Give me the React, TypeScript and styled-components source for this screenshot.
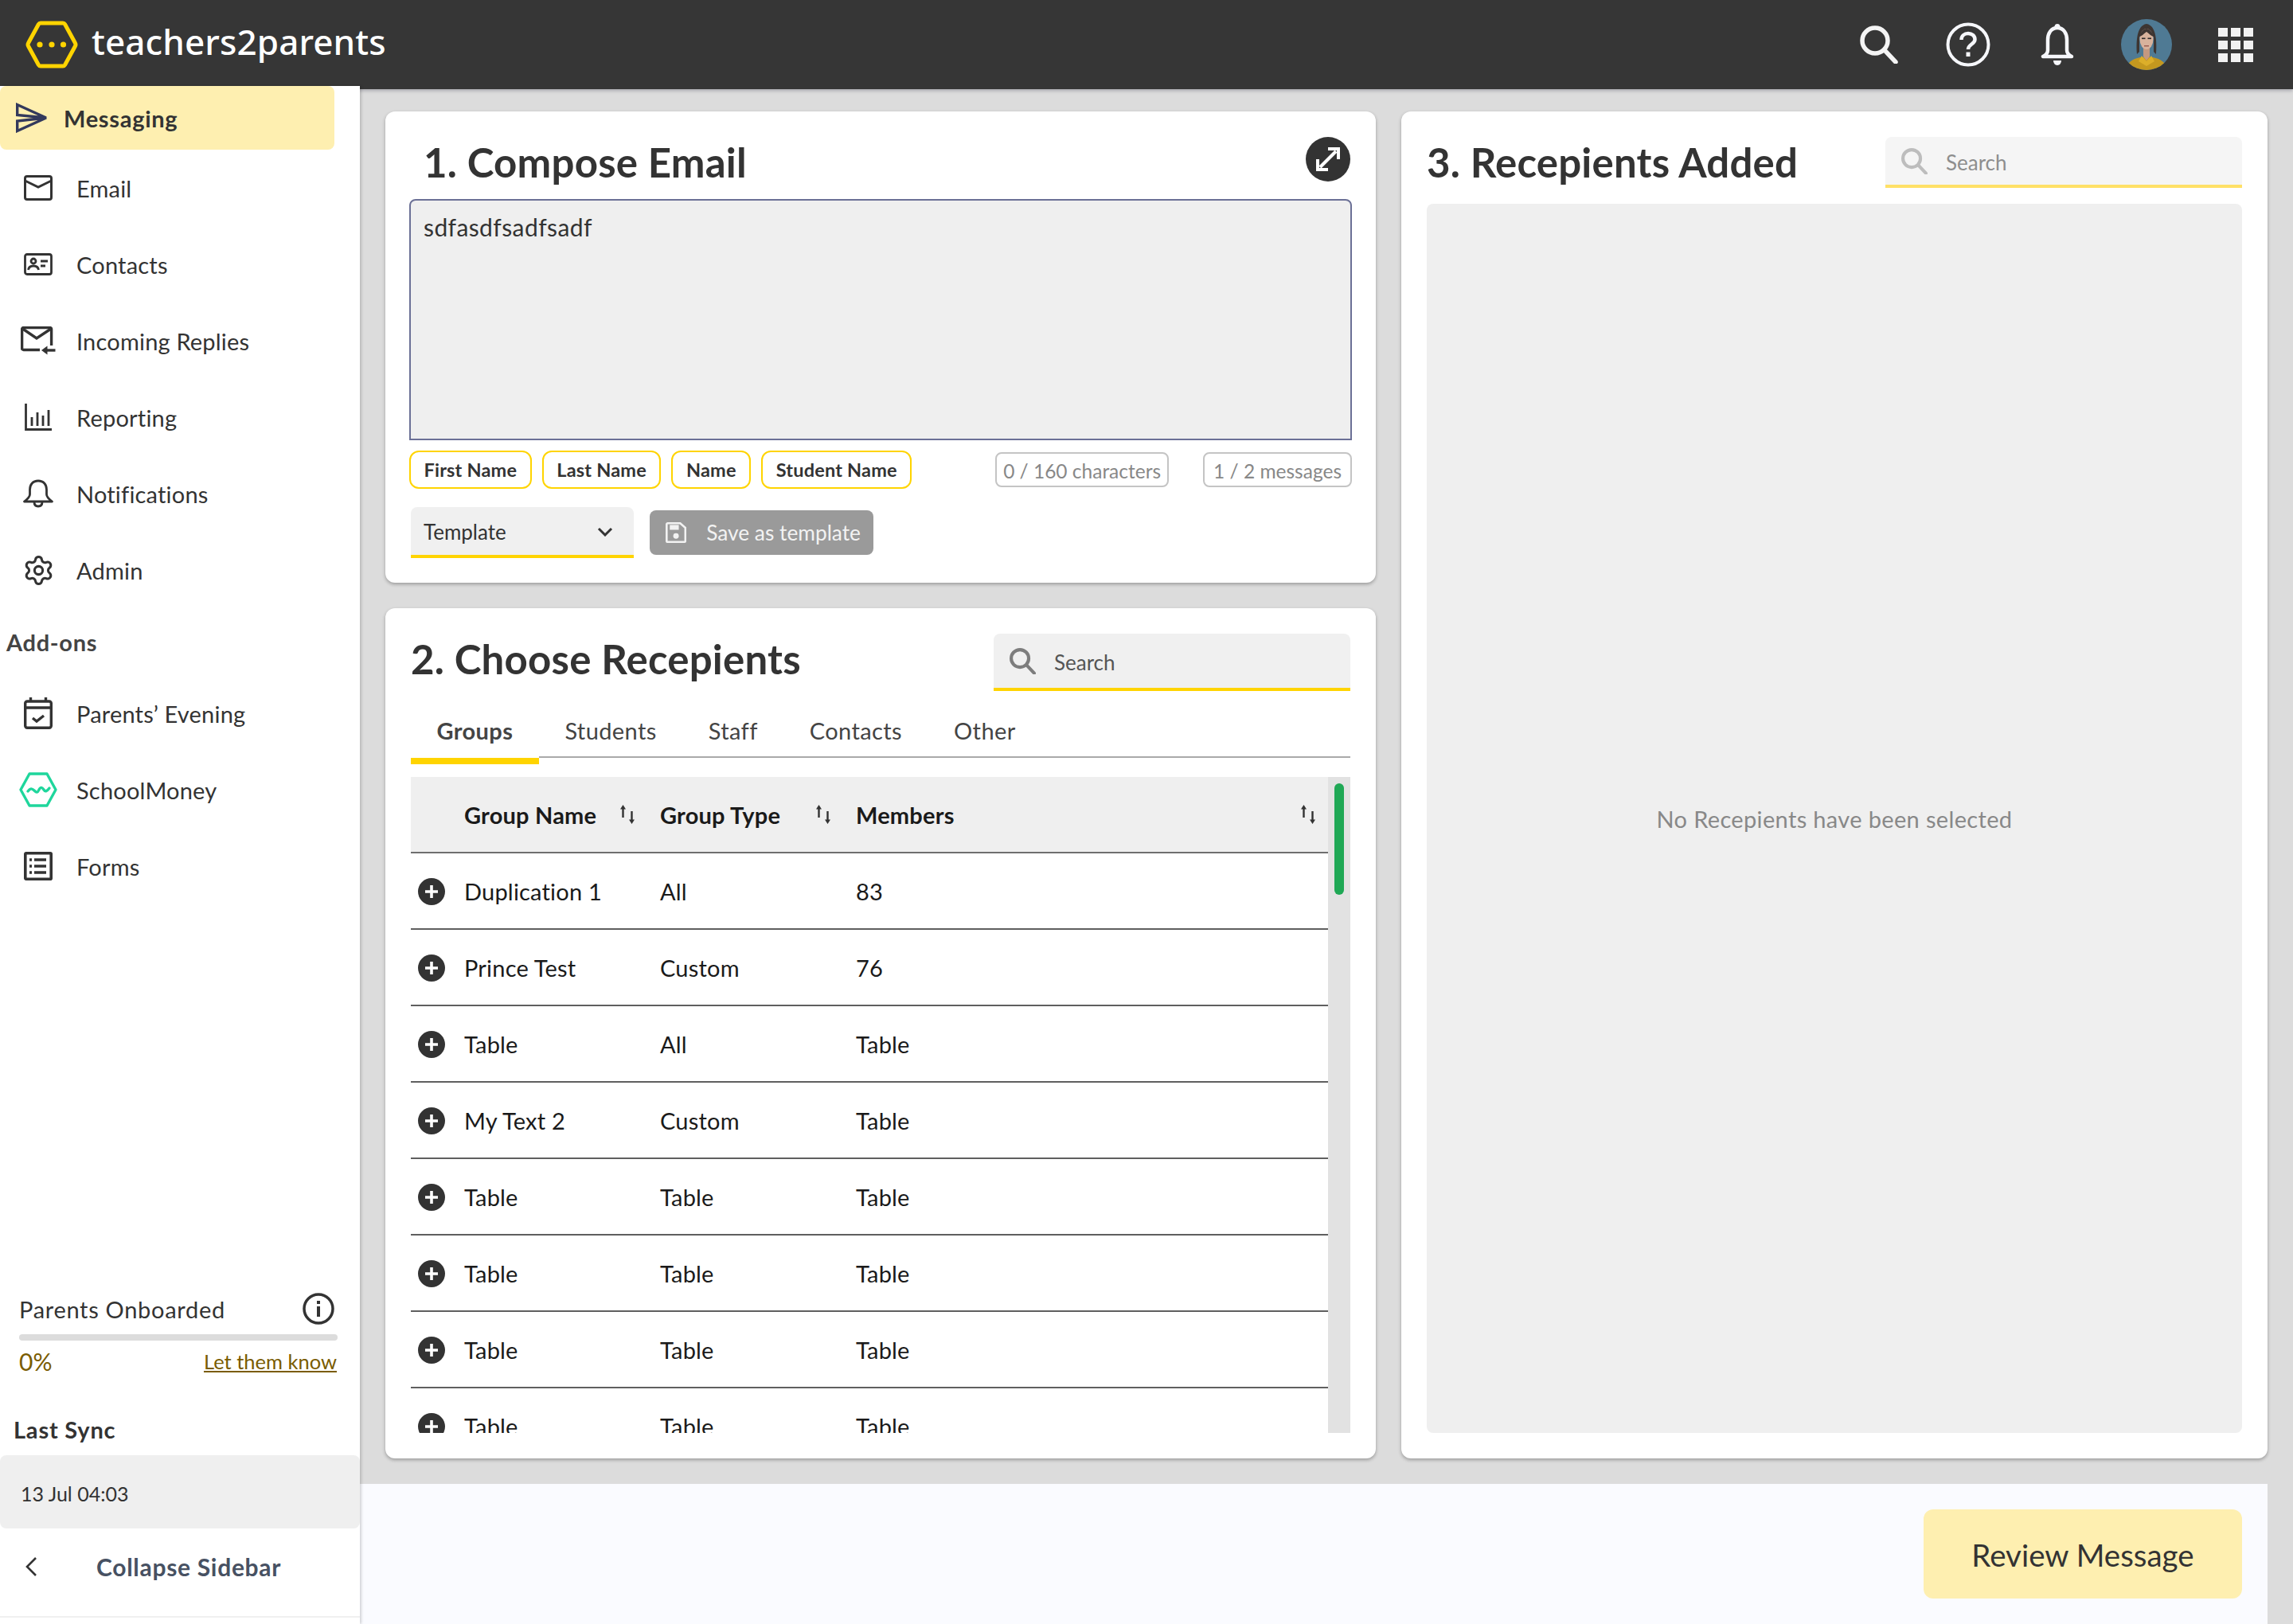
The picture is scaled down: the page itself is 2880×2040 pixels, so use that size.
import { Settings } from "lucide-react";
import styled, { createGlobalStyle } from "styled-components";

const GlobalStyle = createGlobalStyle`
  html, body {
    margin: 0;
    padding: 0;
    background: #dcdcdc;
  }
  * {
    box-sizing: border-box;
  }
`;

const navTop = [
  { label: "Email", icon: <EmailIcon /> },
  { label: "Contacts", icon: <ContactsIcon /> },
  { label: "Incoming Replies", icon: <RepliesIcon /> },
  { label: "Reporting", icon: <ReportingIcon /> },
  { label: "Notifications", icon: <NavBellIcon /> },
  { label: "Admin", icon: <Settings size={41} strokeWidth={1.8} color="#333" /> },
];

const navAddons = [
  { label: "Parents’ Evening", icon: <CalendarIcon /> },
  { label: "SchoolMoney", icon: <MoneyIcon /> },
  { label: "Forms", icon: <FormsIcon /> },
];

const chips = ["First Name", "Last Name", "Name", "Student Name"];
const tabs = ["Groups", "Students", "Staff", "Contacts", "Other"];

const rows = [
  ["Duplication 1", "All", "83"],
  ["Prince Test", "Custom", "76"],
  ["Table", "All", "Table"],
  ["My Text 2", "Custom", "Table"],
  ["Table", "Table", "Table"],
  ["Table", "Table", "Table"],
  ["Table", "Table", "Table"],
  ["Table", "Table", "Table"],
];

export default function App() {
  return (
    <Page>
      <GlobalStyle />
      <Header>
        <Logo>
          <LogoMark />
          <LogoText>teachers2parents</LogoText>
        </Logo>
        <HeaderIcons>
          <HeaderSlot>
            <SearchIcon size={48} color="#f4f4f4" stroke={5.5} />
          </HeaderSlot>
          <HeaderSlot>
            <HelpIcon />
          </HeaderSlot>
          <HeaderSlot>
            <BellSolidIcon />
          </HeaderSlot>
          <HeaderSlot>
            <Avatar />
          </HeaderSlot>
          <HeaderSlot>
            <AppsGrid>
              {Array.from({ length: 9 }).map((_, i) => (
                <AppsDot key={i} />
              ))}
            </AppsGrid>
          </HeaderSlot>
        </HeaderIcons>
      </Header>

      <Body>
        <Sidebar>
          <ActiveItem>
            <PlaneIcon />
            Messaging
          </ActiveItem>
          {navTop.map((n) => (
            <NavItem key={n.label}>
              <NavIcon>{n.icon}</NavIcon>
              {n.label}
            </NavItem>
          ))}
          <AddonsTitle>Add-ons</AddonsTitle>
          {navAddons.map((n) => (
            <NavItem key={n.label}>
              <NavIcon>{n.icon}</NavIcon>
              {n.label}
            </NavItem>
          ))}

          <Onboarding>
            <OnboardRow>
              <OnboardLabel>Parents Onboarded</OnboardLabel>
              <InfoIcon />
            </OnboardRow>
            <Progress />
            <OnboardRow>
              <Percent>0%</Percent>
              <LetKnow>Let them know</LetKnow>
            </OnboardRow>
          </Onboarding>
          <SyncTitle>Last Sync</SyncTitle>
          <SyncBox>13 Jul 04:03</SyncBox>
          <Collapse>
            <CollapseChevron />
            Collapse Sidebar
          </Collapse>
        </Sidebar>

        <Main>
          <Cards>
            <LeftColumn>
              <ComposeCard>
                <ComposeHead>
                  <Title>1. Compose Email</Title>
                  <ExpandButton>
                    <ExpandIcon />
                  </ExpandButton>
                </ComposeHead>
                <MessageBox>sdfasdfsadfsadf</MessageBox>
                <ChipRow>
                  {chips.map((c) => (
                    <Chip key={c}>{c}</Chip>
                  ))}
                  <Counter $first>0 / 160 characters</Counter>
                  <Counter>1 / 2 messages</Counter>
                </ChipRow>
                <ActionRow>
                  <TemplateSelect>
                    Template
                    <ChevronIcon />
                  </TemplateSelect>
                  <SaveButton>
                    <SaveIcon />
                    Save as template
                  </SaveButton>
                </ActionRow>
              </ComposeCard>

              <RecipientsCard>
                <CardHead>
                  <Title>2. Choose Recepients</Title>
                  <SearchField $width={448} $height={72}>
                    <SearchIcon size={33} color="#7d7d7d" stroke={6} />
                    Search
                  </SearchField>
                </CardHead>
                <Tabs>
                  {tabs.map((t, i) => (
                    <Tab key={t} $active={i === 0}>
                      {t}
                    </Tab>
                  ))}
                  <TabFiller />
                </Tabs>
                <TableWrap>
                  <TableBody>
                    <HeadRow>
                      <HeadCell>
                        Group Name
                        <SortIcon />
                      </HeadCell>
                      <HeadCell>
                        Group Type
                        <SortIcon />
                      </HeadCell>
                      <HeadCell>
                        Members
                        <SortIcon />
                      </HeadCell>
                    </HeadRow>
                    {rows.map((r, i) => (
                      <Row key={i}>
                        <AddSlot>
                          <PlusIcon />
                        </AddSlot>
                        <Cell>{r[0]}</Cell>
                        <Cell>{r[1]}</Cell>
                        <Cell>{r[2]}</Cell>
                      </Row>
                    ))}
                  </TableBody>
                  <ScrollTrack>
                    <ScrollThumb />
                  </ScrollTrack>
                </TableWrap>
              </RecipientsCard>
            </LeftColumn>

            <AddedCard>
              <AddedHead>
                <Title>3. Recepients Added</Title>
                <SearchField $width={448} $height={64} $faded>
                  <SearchIcon size={33} color="#bdbdbd" stroke={6} />
                  Search
                </SearchField>
              </AddedHead>
              <EmptyList>No Recepients have been selected</EmptyList>
            </AddedCard>
          </Cards>

          <Footer>
            <ReviewButton>Review Message</ReviewButton>
          </Footer>
        </Main>
      </Body>
    </Page>
  );
}

function LogoMark() {
  return (
    <svg width="66" height="60" viewBox="0 0 66 60" fill="none">
      <path
        d="M19 3h28a3 3 0 0 1 2.6 1.5l12.8 23.5a4 4 0 0 1 0 4L49.6 55.500a3 3 0 0 1-2.600 1.500H19a3 3 0 0 1-2.600-1.500L3.600 32a4 4 0 0 1 0-4L16.400 4.500A3 3 0 0 1 19 3z"
        stroke="#ffd400"
        strokeWidth="5"
      />
      <circle cx="18" cy="30" r="3.600" fill="#ffd400" />
      <circle cx="33" cy="30" r="3.600" fill="#ffd400" />
      <circle cx="47.500" cy="30" r="3.600" fill="#ffd400" />
    </svg>
  );
}

function SearchIcon({ size, color, stroke }: { size: number; color: string; stroke: number }) {
  return (
    <svg width={size} height={size} viewBox="0 0 48 48" fill="none" stroke={color} strokeLinecap="round">
      <circle cx="19" cy="19" r="16" strokeWidth={stroke} />
      <path d="M31 31l14 15" strokeWidth={stroke} />
    </svg>
  );
}

function HelpIcon() {
  return (
    <svg width="56" height="56" viewBox="0 0 56 56" fill="none" stroke="#f6f7fb">
      <circle cx="28" cy="28" r="25.500" strokeWidth="4" />
      <path d="M19.500 22c0-5 3.800-8 8.500-8s8.500 3 8.500 7.500c0 6-8.500 6-8.500 12.500" strokeWidth="4.500" />
      <path d="M28 37.500v5.500" strokeWidth="5" />
    </svg>
  );
}

function BellSolidIcon() {
  return (
    <svg width="42" height="54" viewBox="0 0 42 54" fill="none" stroke="#f6f7fb">
      <path
        d="M21 6c-8 0-12 7-12 15v13c0 3-2 6-6 8h36c-4-2-6-5-6-8V21c0-8-4-15-12-15z"
        strokeWidth="4.500"
        strokeLinejoin="round"
      />
      <circle cx="21" cy="4.500" r="3.500" fill="#f6f7fb" stroke="none" />
      <path d="M16 47h10c0 3-2 6-5 6s-5-3-5-6z" fill="#f6f7fb" stroke="none" />
    </svg>
  );
}

function Avatar() {
  return (
    <svg width="64" height="64" viewBox="0 0 64 64">
      <defs>
        <clipPath id="avatar-clip">
          <circle cx="32" cy="32" r="32" />
        </clipPath>
      </defs>
      <g clipPath="url(#avatar-clip)">
        <rect width="64" height="64" fill="#4f7a94" />
        <path d="M6 64c1-9 8-14 18-16h16c10 2 17 7 18 16z" fill="#c4981f" />
        <path d="M26 46l6 7 6-7 4 7-10 6-10-6z" fill="#dcae2a" />
        <path d="M20 44c-1-14-1-36 12-38 13 2 13 24 12 38l-3-3V22H23v19z" fill="#3d3532" />
        <path d="M28 36h8v11l-4 5-4-5z" fill="#c49880" />
        <ellipse cx="32" cy="25" rx="8.500" ry="13" fill="#d8b29c" />
        <path d="M23 22c2-7 6-10 9-10s7 3 9 10c-4-1-7-5-9-6-2 1-5 5-9 6z" fill="#3d3532" />
        <rect x="26" y="23.500" width="4.500" height="1.600" fill="#2e2b2a" />
        <rect x="33.500" y="23.500" width="4.500" height="1.600" fill="#2e2b2a" />
        <rect x="29" y="33" width="6" height="1.400" fill="#98584f" />
      </g>
    </svg>
  );
}

function PlaneIcon() {
  return (
    <svg width="42" height="38" viewBox="0 0 42 38" fill="none" stroke="#33395c" strokeWidth="3.400">
      <path d="M1.700 2.500L38 19 1.700 15.500z" />
      <path d="M1.700 35.500L38 19 1.700 23z" />
    </svg>
  );
}

function EmailIcon() {
  return (
    <svg width="36" height="32" viewBox="0 0 36 32" fill="none" stroke="#333" strokeWidth="3">
      <rect x="1.500" y="1.500" width="33" height="29" rx="2.500" />
      <path d="M1.500 7l16.500 8 16.500-8" />
    </svg>
  );
}

function ContactsIcon() {
  return (
    <svg width="36" height="28" viewBox="0 0 36 28" fill="none" stroke="#333" strokeWidth="2.800">
      <rect x="1.500" y="1.500" width="33" height="25" rx="2.500" />
      <circle cx="12" cy="10" r="3" />
      <path d="M5.500 21c.5-3.500 3-5 6.500-5s6 1.500 6.500 5" />
      <path d="M21 10h9M21 16h6" />
    </svg>
  );
}

function RepliesIcon() {
  return (
    <svg width="44" height="36" viewBox="0 0 44 36" fill="none" stroke="#333" strokeWidth="3.400">
      <path d="M24 29.500H3.600a2 2 0 0 1-2-2V3.600a2 2 0 0 1 2-2h33a2 2 0 0 1 2 2V24" />
      <path d="M2.500 3L20 15 38 3" />
      <path d="M43.500 30H31" />
      <path d="M33.500 24.500L26 30l7.500 5.500z" fill="#333" stroke="none" />
    </svg>
  );
}

function ReportingIcon() {
  return (
    <svg width="34" height="34" viewBox="0 0 34 34" fill="none" stroke="#333" strokeWidth="2.800">
      <path d="M1.500 0v32.500H34" />
      <path d="M9 17v11M16 11v17M23 15v13M30 8v20" />
    </svg>
  );
}

function NavBellIcon() {
  return (
    <svg width="38" height="36" viewBox="0 0 38 36" fill="none" stroke="#333" strokeWidth="2.800">
      <path d="M19 2c-7 0-10.500 5-10.500 11v6c0 3-3 6-7 9h35c-4-3-7-6-7-9v-6C29.500 7 26 2 19 2z" strokeLinejoin="round" />
      <path d="M14 28.500c0 3.500 2 5.500 5 5.500s5-2 5-5.500" />
    </svg>
  );
}

function CalendarIcon() {
  return (
    <svg width="36" height="40" viewBox="0 0 36 40" fill="none" stroke="#333" strokeWidth="3.400">
      <rect x="1.700" y="5" width="32.600" height="33.300" rx="2.500" />
      <path d="M1.500 13h33" />
      <path d="M8.500 0v6M27.500 0v6" />
      <path d="M11 26l5 4 9-7" />
    </svg>
  );
}

function MoneyIcon() {
  return (
    <svg width="48" height="44" viewBox="0 0 48 44" fill="none" stroke="#1fd69c" strokeWidth="3.400" strokeLinejoin="round">
      <path d="M13 2h22l11 20-11 20H13L2 22z" />
      <path d="M11 24c3-4 5-4 8-1s4 3 6-1 4-3 6 0 4 2 7-2" strokeLinecap="round" />
    </svg>
  );
}

function FormsIcon() {
  return (
    <svg width="36" height="36" viewBox="0 0 36 36" fill="none" stroke="#333" strokeWidth="3.600">
      <rect x="1.800" y="1.800" width="32.400" height="32.400" rx="1" />
      <path d="M13 10h15M13 18h15M13 26h15" />
      <path d="M7 10h3M7 18h3M7 26h3" />
    </svg>
  );
}

function InfoIcon() {
  return (
    <svg width="40" height="40" viewBox="0 0 40 40" fill="none" stroke="#333">
      <circle cx="20" cy="20" r="18" strokeWidth="3.500" />
      <path d="M20 17v13" strokeWidth="4" />
      <path d="M20 10v4" strokeWidth="4" />
    </svg>
  );
}

function CollapseChevron() {
  return (
    <svg width="16" height="26" viewBox="0 0 16 26" fill="none" stroke="#333" strokeWidth="2.600">
      <path d="M14 2L3 13l11 11" />
    </svg>
  );
}

function ExpandIcon() {
  return (
    <svg width="36" height="36" viewBox="0 0 36 36" fill="none" stroke="#fff" strokeWidth="4">
      <path d="M8 28L28 8" />
      <path d="M18 5h13v13" />
      <path d="M5 18v13h13" />
    </svg>
  );
}

function ChevronIcon() {
  return (
    <svg width="20" height="12" viewBox="0 0 20 12" fill="none" stroke="#333" strokeWidth="3">
      <path d="M2 2l8 8 8-8" />
    </svg>
  );
}

function SaveIcon() {
  return (
    <svg width="30" height="30" viewBox="0 0 30 30" fill="none" stroke="#f2f2f2" strokeWidth="3">
      <path d="M3 1.500h18l7.500 6.500v19a1.500 1.500 0 0 1-1.500 1.500H3A1.500 1.500 0 0 1 1.500 27V3A1.500 1.500 0 0 1 3 1.500z" />
      <rect x="6" y="4" width="13" height="7" fill="#f2f2f2" stroke="none" />
      <circle cx="15" cy="20" r="4" fill="#f2f2f2" stroke="none" />
    </svg>
  );
}

function SortIcon() {
  return (
    <svg width="18" height="24" viewBox="0 0 18 24" fill="#333">
      <path d="M3.500 0L7 5.500H4.700V16H2.300V5.500H0z" />
      <path d="M14.500 24L11 18.500h2.300V8h2.400v10.500H18z" />
    </svg>
  );
}

function PlusIcon() {
  return (
    <svg width="34" height="34" viewBox="0 0 34 34">
      <circle cx="17" cy="17" r="17" fill="#333" />
      <path d="M17 9v16M9 17h16" stroke="#fff" strokeWidth="3.600" />
    </svg>
  );
}

const Page = styled.div`
  width: 2880px;
  height: 2040px;
  display: flex;
  flex-direction: column;
  overflow: hidden;
  background: #dcdcdc;
  font-family: "Lato", "Noto Sans", sans-serif;
  font-size: 29px;
  color: #333;
`;

const Header = styled.header`
  height: 112px;
  flex-shrink: 0;
  display: flex;
  align-items: center;
  justify-content: space-between;
  padding: 0 44px 0 32px;
  background: #363636;
  box-shadow: 0 2px 4px rgba(70, 70, 90, 0.35);
`;

const Logo = styled.div`
  display: flex;
  align-items: center;
  gap: 17px;
`;

const LogoText = styled.span`
  font-family: "Noto Sans", sans-serif;
  font-size: 44px;
  font-weight: 500;
  letter-spacing: 0.1px;
  color: #fff;
  position: relative;
  top: -4px;
`;

const HeaderIcons = styled.div`
  display: flex;
  align-items: center;
  gap: 56px;
`;

const HeaderSlot = styled.div`
  display: flex;
  align-items: center;
  justify-content: center;
  width: 56px;
  height: 64px;
  svg {
    flex-shrink: 0;
  }
`;

const AppsGrid = styled.div`
  display: grid;
  grid-template-columns: repeat(3, 12px);
  grid-auto-rows: 11px;
  column-gap: 4px;
  row-gap: 5px;
`;

const AppsDot = styled.span`
  background: #f2f2f2;
`;

const Body = styled.div`
  flex: 1;
  display: flex;
  margin-top: -4px;
  min-height: 0;
`;

const Sidebar = styled.aside`
  width: 452px;
  flex-shrink: 0;
  display: flex;
  flex-direction: column;
  background: #fff;
  box-shadow: 2px 0 3px rgba(0, 0, 0, 0.16);
  position: relative;
  z-index: 1;
`;

const ActiveItem = styled.div`
  width: 420px;
  height: 80px;
  flex-shrink: 0;
  display: flex;
  align-items: center;
  gap: 18px;
  padding-left: 20px;
  border-radius: 8px;
  background: #feefb0;
  font-weight: 700;
  letter-spacing: 0.7px;
`;

const NavItem = styled.div`
  height: 96px;
  flex-shrink: 0;
  display: flex;
  align-items: center;
  letter-spacing: 0.2px;
`;

const NavIcon = styled.span`
  width: 96px;
  flex-shrink: 0;
  display: flex;
  align-items: center;
  justify-content: center;
`;

const AddonsTitle = styled.div`
  height: 84px;
  flex-shrink: 0;
  padding: 0 0 0 8px;
  display: flex;
  align-items: center;
  font-weight: 700;
  letter-spacing: 0.7px;
  color: #444;
`;

const Onboarding = styled.div`
  margin-top: auto;
  padding: 0 28px 0 24px;
  display: flex;
  flex-direction: column;
`;

const OnboardRow = styled.div`
  display: flex;
  align-items: center;
  justify-content: space-between;
  height: 40px;
  svg {
    margin-right: 4px;
  }
`;

const OnboardLabel = styled.span`
  letter-spacing: 0.7px;
`;

const Progress = styled.div`
  height: 8px;
  margin: 12px 0 6px;
  border-radius: 4px;
  background: #dcdcdc;
`;

const Percent = styled.span`
  color: #7a5c00;
  font-size: 30px;
`;

const LetKnow = styled.span`
  color: #7a5c00;
  font-size: 25.500px;
  text-decoration: underline;
  margin-right: 1px;
`;

const SyncTitle = styled.div`
  margin-top: 42px;
  height: 46px;
  padding-left: 17px;
  font-weight: 700;
  letter-spacing: 0.8px;
  display: flex;
  align-items: center;
`;

const SyncBox = styled.div`
  height: 92px;
  margin-top: 10px;
  padding: 4px 0 0 26px;
  display: flex;
  align-items: center;
  border-radius: 8px;
  background: #efefef;
  font-size: 25px;
`;

const Collapse = styled.div`
  height: 112px;
  margin-bottom: 8px;
  flex-shrink: 0;
  display: flex;
  align-items: center;
  gap: 74px;
  padding: 0 0 14px 31px;
  font-size: 30px;
  font-weight: 700;
  letter-spacing: 0.7px;
  color: #475162;
  border-bottom: 2px solid #f0f0f0;
`;

const Main = styled.main`
  flex: 1;
  display: flex;
  flex-direction: column;
  min-width: 0;
`;

const Cards = styled.div`
  height: 1756px;
  flex-shrink: 0;
  padding: 32px 32px 32px;
  display: grid;
  grid-template-columns: 1244px 1088px;
  gap: 32px;
`;

const LeftColumn = styled.div`
  display: flex;
  flex-direction: column;
  gap: 32px;
  min-height: 0;
`;

const CardBase = styled.section`
  background: #fff;
  border-radius: 12px;
  box-shadow: 0 2px 4px rgba(0, 0, 0, 0.3);
`;

const ComposeCard = styled(CardBase)`
  height: 592px;
  flex-shrink: 0;
  padding: 32px 30px 0;
  display: flex;
  flex-direction: column;
`;

const ComposeHead = styled.div`
  height: 78px;
  display: flex;
  align-items: flex-start;
  justify-content: space-between;
  padding: 0 2px 0 18px;
`;

const Title = styled.h2`
  margin: -4px 0 0;
  font-size: 51px;
  line-height: 72px;
  font-weight: 700;
  letter-spacing: 0.2px;
  color: #333;
  white-space: nowrap;
`;

const ExpandButton = styled.div`
  width: 56px;
  height: 56px;
  border-radius: 50%;
  background: #333;
  display: flex;
  align-items: center;
  justify-content: center;
`;

const MessageBox = styled.div`
  height: 303px;
  flex-shrink: 0;
  padding: 14px 16px;
  border: 2px solid #6b7096;
  border-radius: 8px 8px 0 0;
  background: #efefef;
  font-size: 30px;
  line-height: 38px;
  letter-spacing: 0.4px;
`;

const ChipRow = styled.div`
  display: flex;
  align-items: center;
  gap: 13px;
  margin-top: 13px;
  height: 48px;
`;

const Chip = styled.span`
  height: 48px;
  padding: 0 16.500px;
  display: flex;
  align-items: center;
  border: 2px solid #ffd400;
  border-radius: 12px;
  font-size: 23.500px;
  font-weight: 700;
  letter-spacing: 0.2px;
  white-space: nowrap;
`;

const Counter = styled.span<{ $first?: boolean }>`
  height: 44px;
  padding: 2px ${(p) => (p.$first ? "8px" : "11px")} 0;
  display: flex;
  align-items: center;
  justify-content: center;
  border: 2px solid #c4c4c4;
  border-radius: 8px;
  font-size: 24.500px;
  color: #888;
  white-space: nowrap;
  margin-left: ${(p) => (p.$first ? "auto" : "30px")};
`;

const ActionRow = styled.div`
  display: flex;
  align-items: center;
  gap: 20px;
  margin-top: 23px;
  padding-left: 2px;
`;

const TemplateSelect = styled.div`
  width: 280px;
  height: 64px;
  padding: 2px 26px 0 16px;
  display: flex;
  align-items: center;
  justify-content: space-between;
  background: #f0f0f0;
  border-bottom: 4px solid #ffd400;
  border-radius: 8px 8px 0 0;
  font-size: 26px;
`;

const SaveButton = styled.div`
  width: 281px;
  height: 56px;
  padding: 0 16px 0 20px;
  display: flex;
  align-items: center;
  gap: 25px;
  border-radius: 8px;
  background: #9a9a9a;
  color: #f2f2f2;
  font-size: 26.300px;
  white-space: nowrap;
`;

const RecipientsCard = styled(CardBase)`
  flex: 1;
  min-height: 0;
  padding: 32px 32px 32px;
  display: flex;
  flex-direction: column;
`;

const CardHead = styled.div`
  display: flex;
  align-items: flex-start;
  justify-content: space-between;
  height: 72px;
  flex-shrink: 0;
`;

const AddedHead = styled(CardHead)`
  height: 84px;
`;

const SearchField = styled.div<{ $width: number; $height: number; $faded?: boolean }>`
  width: ${(p) => p.$width}px;
  height: ${(p) => p.$height}px;
  padding: 3px 0 0 20px;
  display: flex;
  align-items: center;
  gap: 23px;
  border-radius: 8px 8px 0 0;
  border-bottom: 4px solid ${(p) => (p.$faded ? "#ffe066" : "#ffd400")};
  background: ${(p) => (p.$faded ? "#f5f5f5" : "#f0f0f0")};
  color: ${(p) => (p.$faded ? "#8e8e8e" : "#555")};
  font-size: 26px;
  svg {
    margin-top: -3px;
  }
`;

const Tabs = styled.div`
  display: flex;
  align-items: flex-start;
  height: 82px;
  margin-top: 10px;
  flex-shrink: 0;
`;

const Tab = styled.div<{ $active?: boolean }>`
  padding: 22px 32.500px 0;
  height: ${(p) => (p.$active ? "82px" : "74px")};
  line-height: 36px;
  letter-spacing: 0.4px;
  font-weight: ${(p) => (p.$active ? 700 : 400)};
  color: #444;
  border-bottom: ${(p) => (p.$active ? "8px solid #ffd400" : "2px solid #a9a9a9")};
`;

const TabFiller = styled.div`
  flex: 1;
  height: 74px;
  border-bottom: 2px solid #a9a9a9;
`;

const TableWrap = styled.div`
  flex: 1;
  min-height: 0;
  margin-top: 16px;
  display: flex;
  overflow: hidden;
`;

const TableBody = styled.div`
  flex: 1;
  min-width: 0;
  overflow: hidden;
  letter-spacing: 0.2px;
`;

const HeadRow = styled.div`
  height: 96px;
  padding-left: 67px;
  display: grid;
  grid-template-columns: 246px 246px 1fr;
  background: #efefef;
  border-bottom: 2px solid #6f6f6f;
  color: #1a1a1a;
  font-weight: 700;
`;

const HeadCell = styled.div`
  display: flex;
  align-items: center;
  justify-content: space-between;
  padding-right: 32px;
  &:last-child {
    padding-right: 16px;
  }
`;

const Row = styled.div`
  height: 96px;
  padding-top: 1px;
  display: grid;
  grid-template-columns: 67px 246px 246px 1fr;
  align-items: center;
  border-bottom: 2px solid #5f5f5f;
  color: #1a1a1a;
`;

const AddSlot = styled.div`
  display: flex;
  padding-left: 9px;
`;

const Cell = styled.div`
  white-space: nowrap;
`;

const ScrollTrack = styled.div`
  width: 28px;
  flex-shrink: 0;
  padding-top: 8px;
  background: #e2e2e2;
  display: flex;
  justify-content: center;
`;

const ScrollThumb = styled.div`
  width: 12px;
  height: 140px;
  border-radius: 6px;
  background: #1fa855;
`;

const AddedCard = styled(CardBase)`
  padding: 32px;
  display: flex;
  flex-direction: column;
`;

const EmptyList = styled.div`
  flex: 1;
  display: flex;
  align-items: center;
  justify-content: center;
  border-radius: 8px;
  background: #efefef;
  color: #888;
  letter-spacing: 0.35px;
`;

const Footer = styled.div`
  flex: 1;
  margin-right: 32px;
  padding: 32px;
  display: flex;
  align-items: flex-start;
  justify-content: flex-end;
  background: #fafbff;
`;

const ReviewButton = styled.div`
  width: 400px;
  height: 112px;
  padding-top: 2px;
  display: flex;
  align-items: center;
  justify-content: center;
  border-radius: 12px;
  background: #feefb0;
  font-size: 38.500px;
  color: #333;
`;
